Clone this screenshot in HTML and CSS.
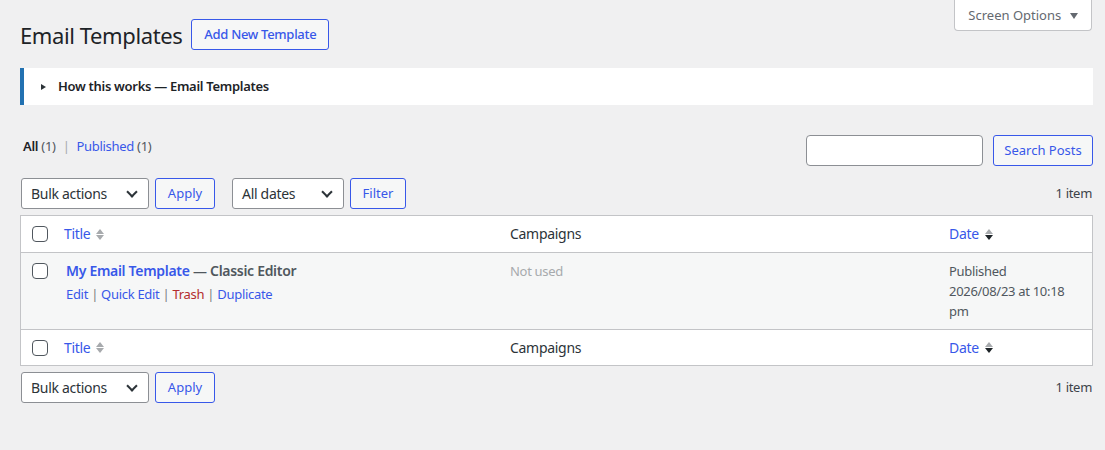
FILE: index.html
```html
<!DOCTYPE html>
<html lang="en">
<head>
    <meta charset="UTF-8">
    <title>Email Templates</title>
    <link rel="stylesheet" href="styles.css">
</head>
<body>
<div class="wrap">
    <div class="top-bar">
        <div class="heading">
            <h1>Email Templates</h1>
            <a href="#" class="page-action">Add New Template</a>
        </div>
        <button type="button" class="screen-options">Screen Options <span class="caret"></span></button>
    </div>

    <div class="howto">
        <span class="howto-arrow"></span>
        <span class="howto-title">How this works — Email Templates</span>
    </div>

    <div class="views-row">
        <ul class="subsubsub">
            <li><b>All</b> <span class="count">(1)</span></li>
            <li class="sep">|</li>
            <li><a href="#">Published</a> <span class="count">(1)</span></li>
        </ul>
        <div class="search-box">
            <input type="search" class="search-input">
            <button type="button" class="btn">Search Posts</button>
        </div>
    </div>

    <div class="tablenav">
        <div class="actions">
            <div class="select select-bulk">Bulk actions <span class="chevron"></span></div>
            <button type="button" class="btn btn-apply">Apply</button>
            <div class="select select-dates">All dates <span class="chevron"></span></div>
            <button type="button" class="btn">Filter</button>
        </div>
        <span class="num-items">1 item</span>
    </div>

    <table class="list-table">
        <thead>
        <tr>
            <td class="col-check"><span class="checkbox"></span></td>
            <th class="col-title"><a href="#">Title</a><span class="sorter"><i class="up"></i><i class="down"></i></span></th>
            <th class="col-campaigns">Campaigns</th>
            <th class="col-date"><a href="#">Date</a><span class="sorter sorted"><i class="up"></i><i class="down"></i></span></th>
        </tr>
        </thead>
        <tbody>
        <tr class="alt">
            <td class="col-check"><span class="checkbox"></span></td>
            <td class="col-title">
                <strong><a href="#">My Email Template</a> — Classic Editor</strong>
                <div class="row-actions">
                    <a href="#">Edit</a> | <a href="#">Quick Edit</a> | <a href="#" class="trash">Trash</a> | <a href="#">Duplicate</a>
                </div>
            </td>
            <td class="col-campaigns"><span class="muted">Not used</span></td>
            <td class="col-date">Published<br>2026/08/23 at 10:18 pm</td>
        </tr>
        </tbody>
        <tfoot>
        <tr>
            <td class="col-check"><span class="checkbox"></span></td>
            <th class="col-title"><a href="#">Title</a><span class="sorter"><i class="up"></i><i class="down"></i></span></th>
            <th class="col-campaigns">Campaigns</th>
            <th class="col-date"><a href="#">Date</a><span class="sorter sorted"><i class="up"></i><i class="down"></i></span></th>
        </tr>
        </tfoot>
    </table>

    <div class="tablenav tablenav-bottom">
        <div class="actions">
            <div class="select select-bulk">Bulk actions <span class="chevron"></span></div>
            <button type="button" class="btn btn-apply">Apply</button>
        </div>
        <span class="num-items">1 item</span>
    </div>
</div>
</body>
</html>
```

FILE: styles.css
```css
* {
    margin: 0;
    padding: 0;
    box-sizing: border-box;
}

body {
    background: #f0f0f1;
    color: #3c434a;
    font-family: "Noto Sans", "Open Sans", sans-serif;
    font-size: 13px;
    line-height: 1.4;
    letter-spacing: -0.3px;
}

a {
    color: #3858e9;
    text-decoration: none;
}

.wrap {
    padding: 0 12px 0 20px;
}

/* header */
.top-bar {
    display: flex;
    justify-content: space-between;
    align-items: flex-start;
}

.heading {
    display: flex;
    align-items: center;
    margin-top: 19px;
}

h1 {
    font-size: 22px;
    font-weight: 400;
    color: #1d2327;
    line-height: 30px;
    letter-spacing: -0.4px;
    margin-right: 9px;
}

.page-action {
    display: inline-block;
    height: 31px;
    line-height: 29px;
    padding: 0 12px;
    border: 1px solid #3858e9;
    border-radius: 3px;
    background: #f6f7f7;
    font-weight: 500;
}

.screen-options {
    width: 138px;
    height: 31px;
    border: 1px solid #c3c4c7;
    border-top: none;
    border-radius: 0 0 4px 4px;
    background: #fff;
    color: #646970;
    font: inherit;
    font-size: 13px;
    white-space: nowrap;
    margin-right: 1px;
}

.caret {
    display: inline-block;
    width: 0;
    height: 0;
    margin-left: 5px;
    border-left: 4px solid transparent;
    border-right: 4px solid transparent;
    border-top: 6px solid #646970;
    vertical-align: 1px;
}

/* how this works box */
.howto {
    display: flex;
    align-items: center;
    height: 37px;
    margin-top: 18px;
    background: #fff;
    border-left: 4px solid #2271b1;
    padding-left: 17px;
}

.howto-arrow {
    width: 0;
    height: 0;
    border-top: 3px solid transparent;
    border-bottom: 3px solid transparent;
    border-left: 5px solid #2c3338;
    margin-right: 12px;
}

.howto-title {
    font-weight: 600;
    color: #1d2327;
}

/* views + search */
.views-row {
    display: flex;
    justify-content: space-between;
    align-items: flex-start;
    margin-top: 30px;
}

.subsubsub {
    list-style: none;
    display: flex;
    padding: 1px 0 0 3px;
    line-height: 20px;
}

.subsubsub b {
    color: #1d2327;
    font-weight: 600;
}

.subsubsub .count {
    color: #50575e;
}

.subsubsub .sep {
    color: #a7aaad;
    margin: 0 7px;
}

.search-box {
    display: flex;
    gap: 10px;
}

.search-input {
    width: 177px;
    height: 31px;
    border: 1px solid #8c8f94;
    border-radius: 4px;
    background: #fff;
}

.btn {
    height: 31px;
    padding: 0 10px;
    border: 1px solid #3858e9;
    border-radius: 3px;
    background: #f6f7f7;
    color: #3858e9;
    font: inherit;
    font-size: 13px;
    white-space: nowrap;
}

.search-box .btn {
    width: 100px;
}

/* table navigation */
.tablenav {
    display: flex;
    justify-content: space-between;
    align-items: center;
    margin-top: 12px;
    height: 31px;
}

.tablenav-bottom {
    margin-top: 6px;
}

.actions {
    display: flex;
    align-items: center;
}

.select {
    display: flex;
    align-items: center;
    justify-content: space-between;
    height: 31px;
    padding: 0 12px 0 9px;
    border: 1px solid #8c8f94;
    border-radius: 3px;
    background: #fff;
    color: #2c3338;
    font-size: 14px;
}

.select-bulk {
    width: 128px;
    margin-left: 1px;
}

.select-dates {
    width: 112px;
    margin-left: 17px;
}

.chevron {
    width: 8px;
    height: 8px;
    border-right: 2px solid #2c3338;
    border-bottom: 2px solid #2c3338;
    transform: rotate(45deg);
    margin-top: -4px;
}

.btn-apply {
    width: 60px;
    margin-left: 6px;
}

.select-dates + .btn {
    width: 56px;
    margin-left: 6px;
}

.num-items {
    color: #3c434a;
    margin-right: 1px;
}

/* list table */
.list-table {
    width: 100%;
    margin-top: 6px;
    border: 1px solid #c3c4c7;
    border-spacing: 0;
    background: #fff;
    table-layout: fixed;
}

.list-table th,
.list-table td {
    text-align: left;
    vertical-align: top;
    padding: 8px 10px;
    font-weight: 400;
}

.list-table thead tr {
    height: 37px;
}

.list-table tbody tr {
    height: 75px;
}

.list-table tfoot tr {
    height: 36px;
}

.list-table thead th,
.list-table tfoot th {
    font-size: 14px;
    color: #2c3338;
    line-height: 20px;
    padding-top: 0;
    padding-bottom: 0;
    vertical-align: middle;
}

.list-table thead th,
.list-table thead td {
    border-bottom: 1px solid #c3c4c7;
}

.list-table tfoot th,
.list-table tfoot td {
    border-top: 1px solid #c3c4c7;
}

.col-check {
    width: 33px;
    padding: 0 !important;
    vertical-align: middle !important;
}

.col-title {
    width: 446px;
}

.col-date {
    width: 153px;
}

.checkbox {
    display: block;
    width: 16px;
    height: 16px;
    margin-left: 11px;
    border: 1px solid #50575e;
    border-radius: 4px;
    background: #fff;
}

tbody .col-check {
    vertical-align: top !important;
}

tbody .col-check .checkbox {
    margin-top: 10px;
}

tr.alt td {
    background: #f6f7f7;
    line-height: 20px;
    color: #50575e;
}

tbody .col-title {
    padding-left: 12px;
    font-size: 14px;
}

tbody .col-title strong {
    color: #50575e;
    font-weight: 600;
}

.row-actions {
    font-size: 13px;
    margin-top: 3px;
    color: #787c82;
}

.row-actions .trash {
    color: #b32d2e;
}

.muted {
    color: #a7aaad;
    font-size: 13px;
}

.col-date {
    font-size: 13px;
}

/* sort arrows */
.sorter {
    display: inline-flex;
    flex-direction: column;
    gap: 1px;
    vertical-align: middle;
    margin-left: 6px;
    margin-top: -2px;
}

.sorter i {
    display: block;
    width: 0;
    height: 0;
    border-left: 4.5px solid transparent;
    border-right: 4.5px solid transparent;
}

.sorter .up {
    border-bottom: 5px solid #a7aaad;
}

.sorter .down {
    border-top: 5px solid #a7aaad;
}

.sorter.sorted .down {
    border-top-color: #1d2327;
}
```
